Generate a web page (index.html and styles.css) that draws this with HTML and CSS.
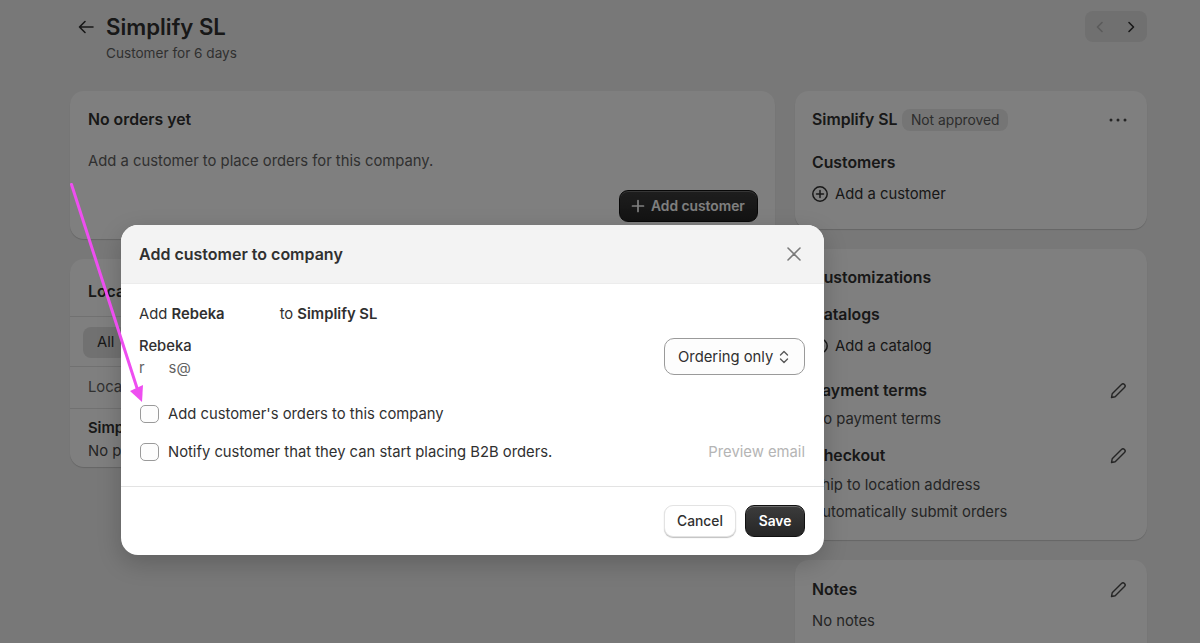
FILE: index.html
```html
<!DOCTYPE html>
<html lang="en">
<head>
<meta charset="utf-8">
<title>Simplify SL</title>
<link rel="stylesheet" href="styles.css">
</head>
<body>
<div class="page">
  <header class="page-head">
    <svg class="back" width="20" height="20" viewBox="0 0 20 20" fill="none" stroke="#303030" stroke-width="1.6" stroke-linecap="round" stroke-linejoin="round"><path d="M17 10H3.500M9 4.500 3.500 10 9 15.500"/></svg>
    <div class="head-text">
      <h1>Simplify SL</h1>
      <p>Customer for 6 days</p>
    </div>
    <div class="pager">
      <svg width="20" height="20" viewBox="0 0 20 20" fill="none" stroke="#b5b5b5" stroke-width="1.6" stroke-linecap="round" stroke-linejoin="round"><path d="M12 5.500 7.500 10l4.500 4.500"/></svg>
      <svg width="20" height="20" viewBox="0 0 20 20" fill="none" stroke="#303030" stroke-width="1.6" stroke-linecap="round" stroke-linejoin="round"><path d="M8 5.500 12.500 10 8 14.500"/></svg>
    </div>
  </header>
  <div class="columns">
    <main class="col-main">
      <section class="card orders">
        <h2>No orders yet</h2>
        <p class="orders-text">Add a customer to place orders for this company.</p>
        <div class="orders-action">
          <button class="btn-dark add-btn"><svg width="16" height="16" viewBox="0 0 16 16" fill="none" stroke="#fff" stroke-width="1.7" stroke-linecap="round"><path d="M8 2.500v11M2.500 8h11"/></svg>Add customer</button>
        </div>
      </section>
      <section class="card locations">
        <h2 class="loc-title">Locations</h2>
        <div class="loc-tabs"><span class="tab">All</span></div>
        <div class="loc-head">Location</div>
        <div class="loc-row">
          <strong>Simplify SL</strong>
          <span class="muted">No payment terms</span>
        </div>
      </section>
    </main>
    <aside class="col-side">
      <section class="card side-company">
        <div class="title-row">
          <h2>Simplify SL</h2>
          <span class="badge">Not approved</span>
          <svg class="dots" width="20" height="6" viewBox="0 0 20 6" fill="#4a4a4a"><circle cx="3" cy="3" r="1.500"/><circle cx="10" cy="3" r="1.500"/><circle cx="17" cy="3" r="1.500"/></svg>
        </div>
        <h3 class="customers-title">Customers</h3>
        <div class="add-link"><svg width="18" height="18" viewBox="0 0 18 18" fill="none" stroke="#303030" stroke-width="1.5" stroke-linecap="round"><circle cx="9" cy="9" r="7.200"/><path d="M9 5.500v7M5.500 9h7"/></svg>Add a customer</div>
      </section>
      <section class="card side-custom">
        <h2 class="custom-title">Customizations</h2>
        <h3 class="catalog-title">Catalogs</h3>
        <div class="add-link catalog-link"><svg width="18" height="18" viewBox="0 0 18 18" fill="none" stroke="#303030" stroke-width="1.5" stroke-linecap="round"><circle cx="9" cy="9" r="7.200"/><path d="M9 5.500v7M5.500 9h7"/></svg>Add a catalog</div>
        <div class="edit-row terms-row">
          <h3>Payment terms</h3>
          <svg class="pencil" width="18" height="18" viewBox="0 0 18 18" fill="none" stroke="#4a4a4a" stroke-width="1.4" stroke-linejoin="round" stroke-linecap="round"><path d="M2.500 15.500 3.200 11.800 12.500 2.500a2.100 2.100 0 0 1 3 3L6.200 14.800z"/></svg>
        </div>
        <p class="muted terms-text">No payment terms</p>
        <div class="edit-row checkout-row">
          <h3>Checkout</h3>
          <svg class="pencil" width="18" height="18" viewBox="0 0 18 18" fill="none" stroke="#4a4a4a" stroke-width="1.4" stroke-linejoin="round" stroke-linecap="round"><path d="M2.500 15.500 3.200 11.800 12.500 2.500a2.100 2.100 0 0 1 3 3L6.200 14.800z"/></svg>
        </div>
        <p class="muted line-one">Ship to location address</p>
        <p class="muted line-two">Automatically submit orders</p>
      </section>
      <section class="card side-notes">
        <div class="edit-row">
          <h3>Notes</h3>
          <svg class="pencil" width="18" height="18" viewBox="0 0 18 18" fill="none" stroke="#4a4a4a" stroke-width="1.4" stroke-linejoin="round" stroke-linecap="round"><path d="M2.500 15.500 3.200 11.800 12.500 2.500a2.100 2.100 0 0 1 3 3L6.200 14.800z"/></svg>
        </div>
        <p class="muted notes-text">No notes</p>
      </section>
    </aside>
  </div>
</div>

<div class="overlay"></div>

<div class="modal">
  <div class="modal-head">
    <h2>Add customer to company</h2>
    <svg width="20" height="20" viewBox="0 0 20 20" fill="none" stroke="#7a7a7a" stroke-width="1.6" stroke-linecap="round"><path d="M4 4l12 12M16 4 4 16"/></svg>
  </div>
  <div class="modal-body">
    <p class="add-line">Add <b>Rebeka</b><span class="redact-a"></span>to <b>Simplify SL</b></p>
    <div class="person">
      <div class="person-text">
        <div class="person-name">Rebeka</div>
        <div class="person-mail"><span>r</span><span>s@</span></div>
      </div>
      <div class="select">Ordering only<svg width="14" height="20" viewBox="0 0 14 20" fill="none" stroke="#5a5a5a" stroke-width="1.4" stroke-linecap="round" stroke-linejoin="round"><path d="M3.500 8 7 4.500 10.500 8M3.500 12 7 15.500 10.500 12"/></svg></div>
    </div>
    <div class="check-row first"><span class="box"></span><span>Add customer's orders to this company</span></div>
    <div class="check-row second">
      <span class="box"></span><span>Notify customer that they can start placing B2B orders.</span>
      <span class="preview">Preview email</span>
    </div>
  </div>
  <div class="modal-foot">
    <button class="btn-light">Cancel</button>
    <button class="btn-dark save-btn">Save</button>
  </div>
</div>

<svg class="arrow" width="100" height="230" viewBox="0 0 100 230" fill="none"><path d="M1.500 1.500 67 205" stroke="#ee4ef0" stroke-width="3" stroke-linecap="round"/><path d="M72 219 60 208 73 202z" fill="#ee4ef0"/></svg>
```

FILE: styles.css
```css
* { box-sizing: border-box; }
html, body { margin: 0; height: 643px; overflow: hidden; }
body {
  background: #f1f1f1;
  color: #303030;
  font-family: Inter, "Liberation Sans", sans-serif;
  font-size: 14.800px;
  line-height: 20px;
  position: relative;
}
h1, h2, h3, p { margin: 0; }
button { font-family: inherit; border: 0; }

.page { padding: 0 53px 0 70px; height: 643px; overflow: hidden; }
.page-head { display: flex; align-items: flex-start; height: 91px; padding-top: 12px; }
.back { margin: 5px 0 0 6px; }
.head-text { margin-left: 10px; flex: 1; }
.page-head h1 { font-size: 22.200px; line-height: 30px; font-weight: 600; color: #303030; }
.page-head p { margin-top: 1px; color: #616161; font-size: 13.600px; }
.pager {
  display: flex; align-items: center; justify-content: space-between;
  width: 62px; height: 31px; padding: 0 6px 0 5px; margin-top: -1px;
  background: #e0e0e0; border-radius: 8px;
}

.columns { display: flex; gap: 20px; align-items: flex-start; }
.col-main { width: 705px; display: flex; flex-direction: column; gap: 20px; }
.col-side { width: 352px; display: flex; flex-direction: column; gap: 20px; }
.card {
  background: #fff; border-radius: 14px;
  box-shadow: 0 1px 1px rgba(0,0,0,.16);
  padding: 18px;
}
.card h2, .card h3 { font-size: 15.800px; font-weight: 600; color: #303030; line-height: 20px; }
.muted { color: #4a4a4a; }

.orders { height: 148px; padding-top: 19px; }
.orders-text { margin-top: 21px; color: #616161; }
.orders-action { display: flex; justify-content: flex-end; margin-top: 19px; margin-right: -1px; }
.btn-dark {
  background: linear-gradient(#3c3c3c, #262626);
  color: #fff; font-weight: 600; font-size: 13.800px;
  border: 1px solid #111; box-shadow: inset 0 1px 0 rgba(255,255,255,.25);
  border-radius: 9px;
}
.add-btn { display: flex; align-items: center; gap: 5px; height: 32px; width: 139px; padding: 0 0 0 10px; }

.locations { height: 208px; padding: 0; }
.loc-title { padding: 23px 18px 0; height: 58px; border-bottom: 1px solid #e3e3e3; }
.loc-tabs { height: 50px; padding: 10px 13px; border-bottom: 1px solid #e3e3e3; }
.tab { display: block; width: 44px; height: 31px; line-height: 31px; padding-left: 14px; background: #e3e3e3; border-radius: 8px; }
.loc-head { height: 42px; padding: 10px 18px; color: #616161; border-bottom: 1px solid #e3e3e3; }
.loc-row { padding: 9px 18px; display: flex; flex-direction: column; gap: 3px; }
.loc-row strong { font-weight: 600; }

.side-company { height: 138px; padding: 18px 18px 18px 17px; }
.title-row { display: flex; align-items: center; }
.title-row .dots { margin-left: auto; margin-right: 1px; }
.badge { margin-left: 5px; background: #ebebeb; color: #5a5a5a; border-radius: 8px; height: 22px; line-height: 22px; padding: 0 8.500px; font-size: 13.800px; }
.customers-title { margin-top: 22px; }
.add-link { display: flex; align-items: center; gap: 6px; margin-top: 11px; margin-left: -1px; }

.side-custom { height: 291px; padding: 19px 18px 18px 17px; }
.catalog-title { margin-top: 17px; }
.catalog-link { margin-top: 11px; }
.edit-row { display: flex; justify-content: space-between; align-items: center; }
.pencil { margin-right: 2px; }
.terms-row { margin-top: 25px; }
.terms-text { margin-top: 8px; }
.checkout-row { margin-top: 17px; }
.line-one { margin-top: 9px; }
.line-two { margin-top: 7px; }

.side-notes { height: 120px; padding: 20px 18px 18px 17px; }
.notes-text { margin-top: 11px; }

.overlay { position: absolute; inset: 0; background: rgba(0,0,0,.5); }

.modal {
  position: absolute; left: 121px; top: 225px; width: 703px; height: 330px;
  background: #fff; border-radius: 17px; overflow: hidden;
  display: flex; flex-direction: column;
  box-shadow: 0 8px 24px rgba(0,0,0,.2);
}
.modal-head {
  height: 59px; flex: none; background: #f3f3f3; border-bottom: 1px solid #ececec;
  display: flex; align-items: center; justify-content: space-between; padding: 0 20px 0 18px;
}
.modal-head h2 { font-size: 16px; font-weight: 600; color: #303030; }
.modal-body { height: 203px; flex: none; border-bottom: 1px solid #e3e3e3; padding: 20px 19px 0 18px; }
.person-name { font-weight: 500; }
.add-line b { font-weight: 600; }
.redact-a { display: inline-block; width: 55px; }
.person { display: flex; justify-content: space-between; align-items: flex-start; margin-top: 12px; }
.person-mail { display: flex; gap: 24px; color: #616161; margin-top: 2px; }
.select {
  display: flex; align-items: center; gap: 4px;
  width: 141px; height: 37px; padding-left: 13px; margin-top: 2px;
  border: 1px solid #9a9a9a; border-radius: 10px; background: #fdfdfd;
}
.check-row { display: flex; align-items: center; gap: 9px; }
.check-row.first { margin-top: 26px; }
.check-row.second { margin-top: 18px; }
.box { width: 19px; height: 18px; border: 1px solid #9a9a9a; border-radius: 5px; background: #fdfdfd; flex: none; margin-left: 1px; }
.preview { margin-left: auto; color: #b5b5b5; }
.modal-foot { flex: 1; display: flex; justify-content: flex-end; align-items: flex-start; gap: 9px; padding: 18px 19px 0 18px; }
.btn-light {
  width: 72px; height: 32px; background: #fff; color: #303030; font-size: 13.800px; font-weight: 500;
  border: 1px solid #e3e3e3; border-radius: 9px; box-shadow: 0 1px 1px rgba(0,0,0,.25);
}
.save-btn { width: 60px; height: 32px; }

.arrow { position: absolute; left: 70px; top: 183px; }
```
